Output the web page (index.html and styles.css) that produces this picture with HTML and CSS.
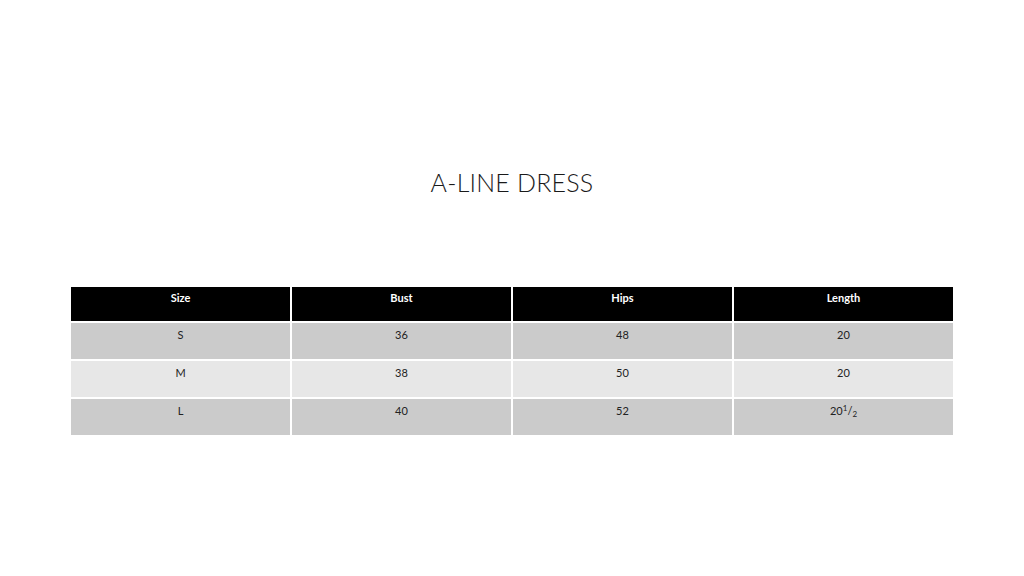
FILE: index.html
```html
<!DOCTYPE html>
<html>
<head>
<meta charset="utf-8">
<link rel="stylesheet" href="styles.css">
</head>
<body>
<main class="slide">
  <h1 class="title">A-LINE DRESS</h1>
  <table class="sizes">
    <thead>
      <tr><th>Size</th><th>Bust</th><th>Hips</th><th>Length</th></tr>
    </thead>
    <tbody>
      <tr class="dark"><td>S</td><td>36</td><td>48</td><td>20</td></tr>
      <tr class="light"><td>M</td><td>38</td><td>50</td><td>20</td></tr>
      <tr class="dark"><td>L</td><td>40</td><td>52</td><td>20<sup class="num">1</sup>/<sub class="den">2</sub></td></tr>
    </tbody>
  </table>
</main>
</body>
</html>
```
FILE: styles.css
```css
html, body {
  margin: 0;
  padding: 0;
  background: #ffffff;
}
.slide {
  width: 1024px;
  height: 576px;
  display: flex;
  flex-direction: column;
  align-items: center;
  font-family: Lato, "Open Sans", "Liberation Sans", sans-serif;
}
.title {
  margin: 166px 0 0 0;
  font-size: 25px;
  line-height: 32px;
  font-weight: 300;
  color: #1a1a1a;
  letter-spacing: 0.2px;
}
.sizes {
  margin-top: 87px;
  width: 886px;
  border-collapse: separate;
  border-spacing: 2px;
  table-layout: fixed;
  font-size: 11px;
}
.sizes th {
  background: #000000;
  color: #ffffff;
  font-weight: 700;
  height: 34px;
  padding: 4px 0 0 0;
  vertical-align: top;
  box-sizing: border-box;
  line-height: 14px;
}
.sizes td {
  height: 36px;
  padding: 5px 0 0 0;
  vertical-align: top;
  text-align: center;
  color: #222222;
  box-sizing: border-box;
  line-height: 14px;
}
.dark td { background: #cbcbcb; }
.light td { background: #e7e7e7; }
.num { font-size: 8px; vertical-align: 4px; line-height: 0; }
.den { font-size: 8px; vertical-align: -2px; line-height: 0; }
```
